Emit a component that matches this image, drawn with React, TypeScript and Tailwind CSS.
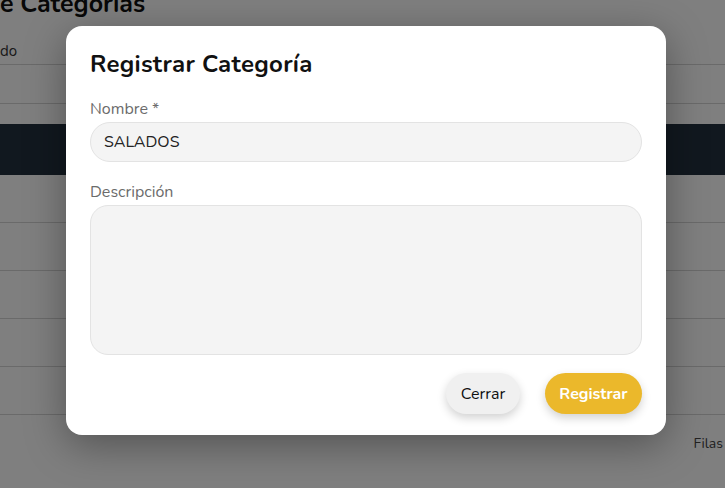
import { useState } from "react";

// Background table rows
const rows = [0, 1, 2, 3, 4];

export default function App() {
  // Local State
  const [nombre, setNombre] = useState("SALADOS");
  const [descripcion, setDescripcion] = useState("");

  return (
    <div className="relative h-[488px] w-[725px] overflow-hidden bg-white font-['Nunito','Lato',sans-serif]">
      {/* Page behind the modal */}
      <div className="flex flex-col">
        <h1 className="-mt-[11px] h-[30px] text-[25px] font-bold leading-[30px] text-[#111]">
          e Categorías
        </h1>
        <div className="mt-[12px] h-[34px] border-b border-[#d4d4d4] pt-[10px] text-[15px] leading-[20px] text-[#333]">
          do
        </div>
        <div className="h-[39px] border-b border-[#d4d4d4]" />
        <div className="mt-[20px] h-[51px] bg-[#22313f]" />
        {rows.map((r) => (
          <div key={r} className="h-[48px] border-b border-[#d4d4d4]" />
        ))}
        <div className="flex justify-end pr-[2px] pt-[18px] text-[14px] text-[#444]">
          Filas
        </div>
      </div>

      {/* Overlay */}
      <div className="absolute inset-0 bg-black/50">
        {/* Modal */}
        <div className="absolute left-[66px] top-[26px] flex h-[409px] w-[600px] flex-col rounded-[16px] bg-white px-[24px] pt-[22px] shadow-[0_10px_40px_rgba(0,0,0,0.35)]">
          <h2 className="text-[24px] font-bold leading-[32px] tracking-[0.3px] text-[#111]">
            Registrar Categoría
          </h2>

          {/* Nombre */}
          <label className="mt-[19px] text-[16px] leading-[20px] text-[#6b6b6b]">
            Nombre *
          </label>
          <input
            value={nombre}
            onChange={(e) => setNombre(e.target.value)}
            className="mt-[3px] h-[40px] rounded-full border border-[#e3e3e3] bg-[#f4f4f4] px-[13px] text-[16px] text-[#222] outline-none"
          />

          {/* Descripción */}
          <label className="mt-[20px] text-[16px] leading-[20px] text-[#6b6b6b]">
            Descripción
          </label>
          <textarea
            value={descripcion}
            onChange={(e) => setDescripcion(e.target.value)}
            className="mt-[3px] h-[150px] resize-none rounded-[18px] border border-[#e3e3e3] bg-[#f4f4f4] px-[13px] py-[10px] text-[16px] text-[#222] outline-none"
          />

          {/* Actions */}
          <div className="mt-[18px] flex justify-end gap-[25px]">
            <button className="h-[41px] w-[74px] rounded-full bg-[#f0f0f0] text-[16px] text-[#111] shadow-[0_4px_10px_rgba(0,0,0,0.18)]">
              Cerrar
            </button>
            <button className="h-[41px] w-[97px] rounded-full bg-[#ebb82b] text-[16px] font-bold text-white shadow-[0_4px_10px_rgba(0,0,0,0.18)]">
              Registrar
            </button>
          </div>
        </div>
      </div>
    </div>
  );
}
